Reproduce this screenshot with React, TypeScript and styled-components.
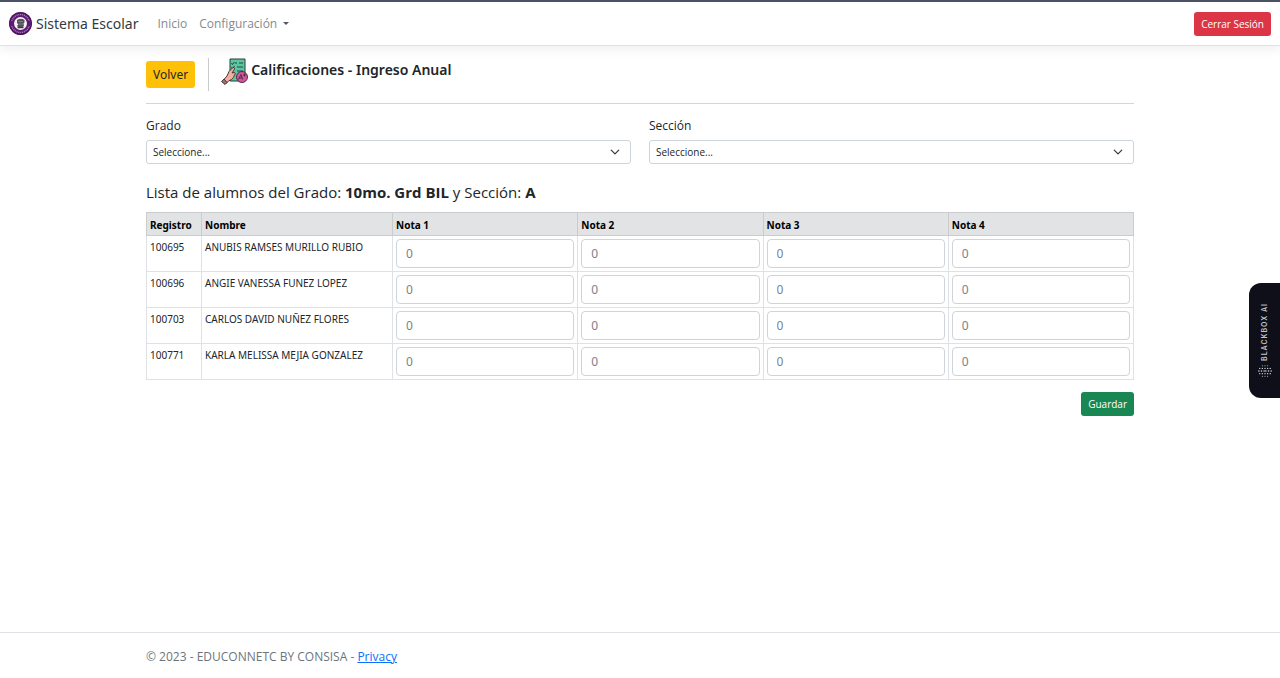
import React from "react";
import styled, { createGlobalStyle } from "styled-components";

const GlobalStyle = createGlobalStyle`
  *, *::before, *::after { box-sizing: border-box; }
  body {
    margin: 0;
    background: #fff;
    color: #212529;
    font-family: "Open Sans", "Noto Sans", sans-serif;
    font-size: 12px;
    line-height: 18px;
  }
  button, input, select { font-family: inherit; margin: 0; }
`;

const Page = styled.div`
  display: flex;
  flex-direction: column;
  min-height: 100vh;
`;

const NavBar = styled.header`
  display: flex;
  align-items: center;
  justify-content: space-between;
  height: 46px;
  padding: 0 9px;
  border-top: 2px solid #4b5266;
  border-bottom: 1px solid #dee2e6;
  box-shadow: 0 4px 10px rgba(0, 0, 0, 0.06);
`;

const NavGroup = styled.nav`
  display: flex;
  align-items: center;
  gap: 12px;
`;

const Brand = styled.a`
  display: flex;
  align-items: center;
  gap: 4px;
  margin-right: 7px;
  color: #343a40;
  font-family: "Noto Sans", sans-serif;
  font-size: 14px;
  line-height: 24px;
  text-decoration: none;
`;

const NavLink = styled.a`
  color: #868a8d;
  text-decoration: none;
`;

const NavMenu = styled.button`
  display: flex;
  align-items: center;
  gap: 6px;
  padding: 0;
  border: 0;
  background: none;
  color: #868a8d;
  font-size: 12px;
  line-height: 18px;

  &::after {
    content: "";
    border: 3px solid transparent;
    border-top-color: #55585b;
    border-bottom: 0;
  }
`;

const variants = {
  danger: { background: "#dc3545", color: "#fff" },
  warning: { background: "#ffc107", color: "#212529" },
  success: { background: "#198754", color: "#fff" },
};

const Button = styled.button<{ $variant: keyof typeof variants; $large?: boolean }>`
  height: ${(p) => (p.$large ? 27 : 24)}px;
  padding: 0 7px;
  border: 0;
  border-radius: 3px;
  background: ${(p) => variants[p.$variant].background};
  color: ${(p) => variants[p.$variant].color};
  font-family: ${(p) => (p.$large ? '"Noto Sans", sans-serif' : "inherit")};
  font-size: ${(p) => (p.$large ? 12 : 10)}px;
  line-height: 18px;
  white-space: nowrap;
`;

const containerWidth = `
  width: 100%;
  max-width: 1006px;
  margin: 0 auto;
  padding: 0 9px;
`;

const Main = styled.main`
  ${containerWidth}
  flex: 1;
`;

const TitleBar = styled.div`
  display: flex;
  align-items: flex-start;
  gap: 13px;
  padding: 12px 0;
  border-bottom: 1px solid #d3d5d6;

  & > button { margin-top: 3px; }
`;

const TitleBox = styled.div`
  display: flex;
  align-items: flex-start;
  gap: 3px;
  height: 33px;
  padding-left: 12px;
  border-left: 1px solid #c8cbcd;
`;

const Title = styled.h1`
  margin: 0;
  font-family: "Noto Sans", sans-serif;
  font-size: 14px;
  line-height: 24px;
  font-weight: 600;
`;

const Filters = styled.form`
  display: grid;
  grid-template-columns: 1fr 1fr;
  gap: 18px;
  padding-top: 13px;
`;

const Field = styled.div`
  display: flex;
  flex-direction: column;
  gap: 5px;
`;

const SelectBox = styled.div`
  display: grid;
  align-items: center;

  & > * { grid-area: 1 / 1; }
  & > svg { justify-self: end; margin-right: 11px; pointer-events: none; }
`;

const Select = styled.select`
  appearance: none;
  width: 100%;
  height: 24px;
  padding: 0 24px 0 6px;
  border: 1px solid #ced4da;
  border-radius: 3px;
  background: #fff;
  color: #212529;
  font-size: 10px;
`;

const ListTitle = styled.h2`
  margin: 18px 0 10px;
  font-size: 15px;
  line-height: 20px;
  font-weight: 400;

  strong { font-weight: 700; }
`;

const Table = styled.table`
  width: 100%;
  border-collapse: collapse;
  table-layout: fixed;
  font-family: "Noto Sans", sans-serif;
  font-size: 10px;
  line-height: 16px;
`;

const Col = styled.col<{ $width?: number }>`
  width: ${(p) => (p.$width ? `${p.$width}px` : "auto")};
`;

const HeadCell = styled.th`
  padding: 4px 3px 2px;
  border: 1px solid #cbccce;
  background: #e2e3e5;
  color: #000;
  text-align: left;
  font-weight: 700;
`;

const Cell = styled.td`
  height: 36px;
  padding: 3px;
  border: 1px solid #dee2e6;
  vertical-align: top;
  white-space: nowrap;
`;

const GradeInput = styled.input`
  display: block;
  width: 100%;
  height: 29px;
  padding: 0 9px;
  border: 1px solid #ced4da;
  border-radius: 4px;
  background: #fff;
  color: #212529;
  font-size: 12px;

  &::placeholder { color: #7c8288; opacity: 1; }
`;

const Actions = styled.div`
  display: flex;
  justify-content: flex-end;
  padding: 12px 0;
`;

const Footer = styled.footer`
  padding-top: 2px;
  border-top: 1px solid #dee2e6;
  color: #6c757d;
  line-height: 43px;
`;

const FooterInner = styled.div`
  ${containerWidth}

  a { color: #0d6efd; }
`;

const SideTab = styled.button`
  position: fixed;
  right: 0;
  top: 283px;
  display: flex;
  flex-direction: column;
  align-items: center;
  justify-content: center;
  gap: 4px;
  width: 31px;
  height: 115px;
  padding: 0;
  border: 0;
  border-radius: 12px 0 0 12px;
  background: #0e0f19;
  color: #c4c5ca;
`;

const SideLabel = styled.span`
  writing-mode: vertical-rl;
  transform: rotate(180deg);
  font-family: Inter, sans-serif;
  font-size: 7px;
  font-weight: 600;
  line-height: 10px;
  letter-spacing: 1px;
`;

const Logo = () => (
  <svg width="23" height="23" viewBox="0 0 46 46" aria-hidden="true">
    <circle cx="23" cy="23" r="23" fill="#5c1a70" />
    <circle cx="23" cy="23" r="18" fill="none" stroke="#a982b5" strokeWidth="3" strokeDasharray="2.2 1.6" />
    <circle cx="23" cy="23" r="21.5" fill="none" stroke="#481058" strokeWidth="2" />
    <path d="M2 18h8v10H2zM36 18h8v10h-8z" fill="#5c1a70" />
    <circle cx="23" cy="23" r="13" fill="#f5f2f6" />
    <path d="M16 16q8-5 15 0v5l-2 2 1 5-3 2H18l-2-3 3-2-3-3z" fill="#55525a" />
    <path d="M18 19h10M20 24h9" stroke="#8d8991" strokeWidth="1.5" />
    <path d="M17 31h12" stroke="#3f3b43" strokeWidth="3" />
  </svg>
);

const GradesIcon = () => (
  <svg width="27" height="27" viewBox="0 0 54 54" aria-hidden="true">
    <path d="M18 2h30v44H18z" fill="#5cc6a2" stroke="#263c3c" strokeWidth="2" />
    <path d="M28 10h4M36 10h8M32 18h12M32 26h12M32 34h6" stroke="#214743" strokeWidth="2" />
    <path d="m21 10 2 3 4-5M21 18l2 3 4-5" fill="none" stroke="#214743" strokeWidth="2" />
    <path d="M4 45 12 36l4-9 8-8c3-1 4 2 2 5l-4 6 4-1c3 0 3 3 1 5l-2 5-4 4-6 3-6 6z" fill="#edb19d" stroke="#49363b" strokeWidth="2" strokeLinejoin="round" />
    <path d="m1 47 5-5 6 7-4 4z" fill="#9b7077" stroke="#49363b" strokeWidth="2" />
    <circle cx="42" cy="38" r="11" fill="#cf579a" stroke="#542d4c" strokeWidth="2" />
    <path d="m35 43 5-10 3 10M37 40h6M44 34h6M47 31v6" fill="none" stroke="#542d4c" strokeWidth="2" />
  </svg>
);

const Chevron = () => (
  <svg width="10" height="10" viewBox="0 0 16 16" aria-hidden="true">
    <path d="m2 5 6 6 6-6" fill="none" stroke="#343a40" strokeWidth="2" strokeLinecap="round" strokeLinejoin="round" />
  </svg>
);

const dotRows = [
  { y: 1, xs: [5, 8, 11], r: 0.6 },
  { y: 4, xs: [2, 5, 8, 11, 14], r: 0.8 },
  { y: 7, xs: [1, 4, 7, 9, 12, 15], r: 0.9 },
  { y: 10, xs: [2, 5, 8, 11, 14], r: 0.8 },
  { y: 13, xs: [5, 8, 11], r: 0.6 },
];

const DotsIcon = () => (
  <svg width="14" height="14" viewBox="0 0 16 14" aria-hidden="true">
    {dotRows.map((row) =>
      row.xs.map((x) => <circle key={`${x}-${row.y}`} cx={x} cy={row.y} r={row.r} fill="#d5d6dc" />)
    )}
  </svg>
);

const grades = ["Nota 1", "Nota 2", "Nota 3", "Nota 4"];

const students = [
  { id: "100695", name: "ANUBIS RAMSES MURILLO RUBIO" },
  { id: "100696", name: "ANGIE VANESSA FUNEZ LOPEZ" },
  { id: "100703", name: "CARLOS DAVID NUÑEZ FLORES" },
  { id: "100771", name: "KARLA MELISSA MEJIA GONZALEZ" },
];

const SelectField = ({ id, label }: { id: string; label: string }) => (
  <Field>
    <label htmlFor={id}>{label}</label>
    <SelectBox>
      <Select id={id}>
        <option>Seleccione...</option>
      </Select>
      <Chevron />
    </SelectBox>
  </Field>
);

export default function App() {
  return (
    <Page>
      <GlobalStyle />
      <NavBar>
        <NavGroup>
          <Brand href="#">
            <Logo />
            Sistema Escolar
          </Brand>
          <NavLink href="#">Inicio</NavLink>
          <NavMenu type="button">Configuración</NavMenu>
        </NavGroup>
        <Button type="button" $variant="danger">Cerrar Sesión</Button>
      </NavBar>

      <Main>
        <TitleBar>
          <Button type="button" $variant="warning" $large>Volver</Button>
          <TitleBox>
            <GradesIcon />
            <Title>Calificaciones - Ingreso Anual</Title>
          </TitleBox>
        </TitleBar>

        <Filters>
          <SelectField id="grado" label="Grado" />
          <SelectField id="seccion" label="Sección" />
        </Filters>

        <ListTitle>
          Lista de alumnos del Grado: <strong>10mo. Grd BIL</strong> y Sección: <strong>A</strong>
        </ListTitle>

        <Table>
          <colgroup>
            <Col $width={55} />
            <Col $width={191} />
            {grades.map((g) => <Col key={g} />)}
          </colgroup>
          <thead>
            <tr>
              <HeadCell>Registro</HeadCell>
              <HeadCell>Nombre</HeadCell>
              {grades.map((g) => <HeadCell key={g}>{g}</HeadCell>)}
            </tr>
          </thead>
          <tbody>
            {students.map((s) => (
              <tr key={s.id}>
                <Cell>{s.id}</Cell>
                <Cell>{s.name}</Cell>
                {grades.map((g) => (
                  <Cell key={g}>
                    <GradeInput type="text" placeholder="0" aria-label={`${g} de ${s.name}`} />
                  </Cell>
                ))}
              </tr>
            ))}
          </tbody>
        </Table>

        <Actions>
          <Button type="button" $variant="success">Guardar</Button>
        </Actions>
      </Main>

      <Footer>
        <FooterInner>
          © 2023 - EDUCONNETC BY CONSISA - <a href="#">Privacy</a>
        </FooterInner>
      </Footer>

      <SideTab type="button">
        <SideLabel>BLACKBOX AI</SideLabel>
        <DotsIcon />
      </SideTab>
    </Page>
  );
}
